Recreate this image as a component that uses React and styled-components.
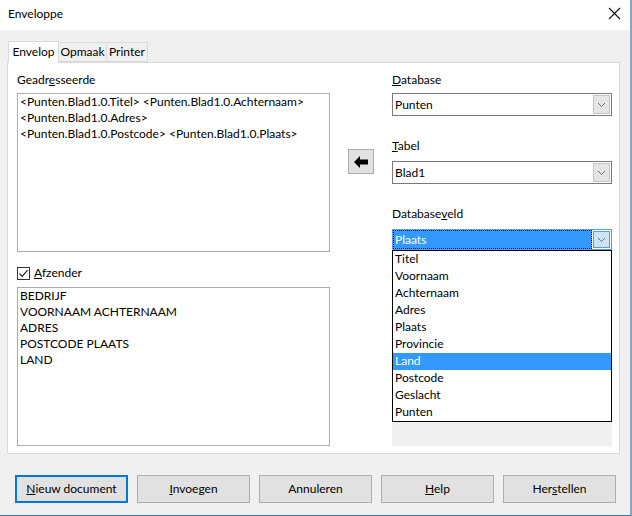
import React from "react";
import styled, { createGlobalStyle } from "styled-components";

const GlobalStyle = createGlobalStyle`
  html, body {
    margin: 0;
    padding: 0;
    background: #ffffff;
  }
  body {
    font-family: Lato, "Noto Sans", sans-serif;
    font-size: 12px;
    color: #000;
  }
  * { box-sizing: border-box; }
`;

const Window = styled.div`
  width: 632px;
  height: 516px;
  display: flex;
  flex-direction: column;
  border-right: 2px solid #8aa5c4;
  border-bottom: 1px solid #2b78c0;
  overflow: hidden;
`;

const TitleBar = styled.div`
  height: 30px;
  flex-shrink: 0;
  background: #fff;
  display: flex;
  align-items: center;
  justify-content: space-between;
  padding: 0 9px 3px 8px;
`;

const Title = styled.span`
  line-height: 16px;
`;

const Body = styled.div`
  flex: 1;
  background: #f0f0f0;
  padding: 10px 0 0 7px;
  display: flex;
  flex-direction: column;
`;

const TabRow = styled.div`
  display: flex;
  align-items: flex-end;
  padding-left: 1px;
  height: 22px;
  position: relative;
  z-index: 1;
`;

const Tab = styled.div`
  width: ${(p) => p.$w}px;
  height: ${(p) => (p.$active ? 22 : 20)}px;
  margin-bottom: ${(p) => (p.$active ? -1 : 0)}px;
  padding-bottom: 1px;
  background: ${(p) => (p.$active ? "#fff" : "#f0f0f0")};
  border: 1px solid #d9d9d9;
  border-bottom: ${(p) => (p.$active ? "none" : "1px solid #d9d9d9")};
  border-left: ${(p) => (p.$first ? "1px solid #d9d9d9" : "none")};
  display: flex;
  align-items: center;
  justify-content: center;
  line-height: 16px;
  white-space: nowrap;
`;

const Panel = styled.div`
  width: 613px;
  height: 392px;
  background: #fff;
  border: 1px solid #d9d9d9;
  padding: 9px 8px 7px 9px;
  display: grid;
  grid-template-columns: 313px 62px 220px;
`;

const Column = styled.div`
  display: flex;
  flex-direction: column;
`;

const Label = styled.div`
  height: 16px;
  line-height: 15px;
  margin-top: ${(p) => p.$top || 0}px;
  margin-bottom: ${(p) => p.$gap || 5}px;
`;

const TextBox = styled.div`
  height: 159px;
  border: 1px solid #adadad;
  padding: 0 2px;
  line-height: 16px;
  white-space: pre;
`;

const CheckRow = styled.label`
  display: flex;
  align-items: center;
  gap: 4px;
  height: 16px;
  margin: 13px 0 6px;
  line-height: 16px;
`;

const CheckBox = styled.span`
  width: 13px;
  height: 13px;
  border: 1px solid #333;
  background: #fff;
  display: flex;
  align-items: center;
  justify-content: center;
`;

const ArrowButton = styled.div`
  width: 26px;
  height: 25px;
  margin: 77px 0 0 18px;
  background: #e1e1e1;
  border: 1px solid #adadad;
  display: flex;
  align-items: center;
  justify-content: center;
`;

const Select = styled.div`
  height: ${(p) => p.$h || 23}px;
  display: flex;
  border: 1px solid ${(p) => (p.$focus ? "#569de5" : "#7a7a7a")};
  background: #fff;
`;

const SelectValue = styled.div`
  flex: 1;
  line-height: 16px;
  display: flex;
  align-items: center;
  padding-left: 2px;
  ${(p) =>
    p.$focus &&
    `
    background: #3399ff;
    color: #fff;
    outline: 1px dotted #000;
    outline-offset: -1px;
  `}
`;

const SelectButton = styled.div`
  width: 17px;
  margin: 1px;
  display: flex;
  align-items: center;
  justify-content: center;
  background: ${(p) => (p.$focus ? "#cce4f7" : "#e5e5e5")};
  border: 1px solid ${(p) => (p.$focus ? "#569de5" : "#c4c4c4")};
`;

const FieldArea = styled.div`
  position: relative;
  height: 196px;
  background: #f0f0f0;
`;

const Popup = styled.ul`
  position: absolute;
  top: 0;
  left: 0;
  right: 0;
  margin: 0;
  padding: 0;
  list-style: none;
  background: #fff;
  border: 1px solid #000;
`;

const PopupItem = styled.li`
  height: 17px;
  line-height: 16px;
  padding-left: 2px;
  background: ${(p) => (p.$selected ? "#3399ff" : "transparent")};
  color: ${(p) => (p.$selected ? "#fff" : "#000")};
`;

const ButtonRow = styled.div`
  display: flex;
  gap: 9px;
  margin: 21px 0 0 8px;
`;

const Button = styled.div`
  width: 113px;
  height: 28px;
  padding-bottom: 1px;
  background: #e1e1e1;
  border: ${(p) => (p.$default ? "2px solid #0078d7" : "1px solid #adadad")};
  display: flex;
  align-items: center;
  justify-content: center;
  line-height: 16px;
`;

const Chevron = () => (
  <svg width="9" height="6" viewBox="0 0 9 6">
    <path d="M1 1 L4.5 4.5 L8 1" fill="none" stroke="#707070" strokeWidth="1" />
  </svg>
);

const fields = [
  "Titel",
  "Voornaam",
  "Achternaam",
  "Adres",
  "Plaats",
  "Provincie",
  "Land",
  "Postcode",
  "Geslacht",
  "Punten",
];

export default function App() {
  return (
    <>
      <GlobalStyle />
      <Window>
        <TitleBar>
          <Title>Enveloppe</Title>
          <svg width="13" height="13" viewBox="0 0 13 13">
            <path d="M1 1 L12 12 M12 1 L1 12" stroke="#111" strokeWidth="1.1" />
          </svg>
        </TitleBar>
        <Body>
          <TabRow>
            <Tab $active $first $w={51}>Envelop</Tab>
            <Tab $w={48}>Opmaak</Tab>
            <Tab $w={41}>Printer</Tab>
          </TabRow>
          <Panel>
            <Column>
              <Label>
                Geadr<u>e</u>sseerde
              </Label>
              <TextBox>
                {"<Punten.Blad1.0.Titel> <Punten.Blad1.0.Achternaam>\n<Punten.Blad1.0.Adres>\n<Punten.Blad1.0.Postcode> <Punten.Blad1.0.Plaats>"}
              </TextBox>
              <CheckRow>
                <CheckBox>
                  <svg width="11" height="11" viewBox="0 0 11 11">
                    <path d="M1.5 5.5 L4.2 8.3 L9.6 2.2" fill="none" stroke="#222" strokeWidth="1.2" />
                  </svg>
                </CheckBox>
                <span>
                  <u>A</u>fzender
                </span>
              </CheckRow>
              <TextBox>{"BEDRIJF\nVOORNAAM ACHTERNAAM\nADRES\nPOSTCODE PLAATS\nLAND"}</TextBox>
            </Column>

            <Column>
              <ArrowButton>
                <svg width="14" height="12" viewBox="0 0 14 12">
                  <path d="M0 6 L6 0 L6 3.5 L14 3.5 L14 8.5 L6 8.5 L6 12 Z" fill="#000" />
                </svg>
              </ArrowButton>
            </Column>

            <Column>
              <Label>
                <u>D</u>atabase
              </Label>
              <Select>
                <SelectValue>Punten</SelectValue>
                <SelectButton>
                  <Chevron />
                </SelectButton>
              </Select>
              <Label $top={22} $gap={7}>
                <u>T</u>abel
              </Label>
              <Select>
                <SelectValue>Blad1</SelectValue>
                <SelectButton>
                  <Chevron />
                </SelectButton>
              </Select>
              <Label $top={22} $gap={7}>
                Database<u>v</u>eld
              </Label>
              <Select $focus $h={21}>
                <SelectValue $focus>Plaats</SelectValue>
                <SelectButton $focus>
                  <Chevron />
                </SelectButton>
              </Select>
              <FieldArea>
                <Popup>
                  {fields.map((f) => (
                    <PopupItem key={f} $selected={f === "Land"}>
                      {f}
                    </PopupItem>
                  ))}
                </Popup>
              </FieldArea>
            </Column>
          </Panel>
          <ButtonRow>
            <Button $default>
              <span>
                <u>N</u>ieuw document
              </span>
            </Button>
            <Button>
              <span>
                <u>I</u>nvoegen
              </span>
            </Button>
            <Button>Annuleren</Button>
            <Button>
              <span>
                <u>H</u>elp
              </span>
            </Button>
            <Button>
              <span>
                Her<u>s</u>tellen
              </span>
            </Button>
          </ButtonRow>
        </Body>
      </Window>
    </>
  );
}
